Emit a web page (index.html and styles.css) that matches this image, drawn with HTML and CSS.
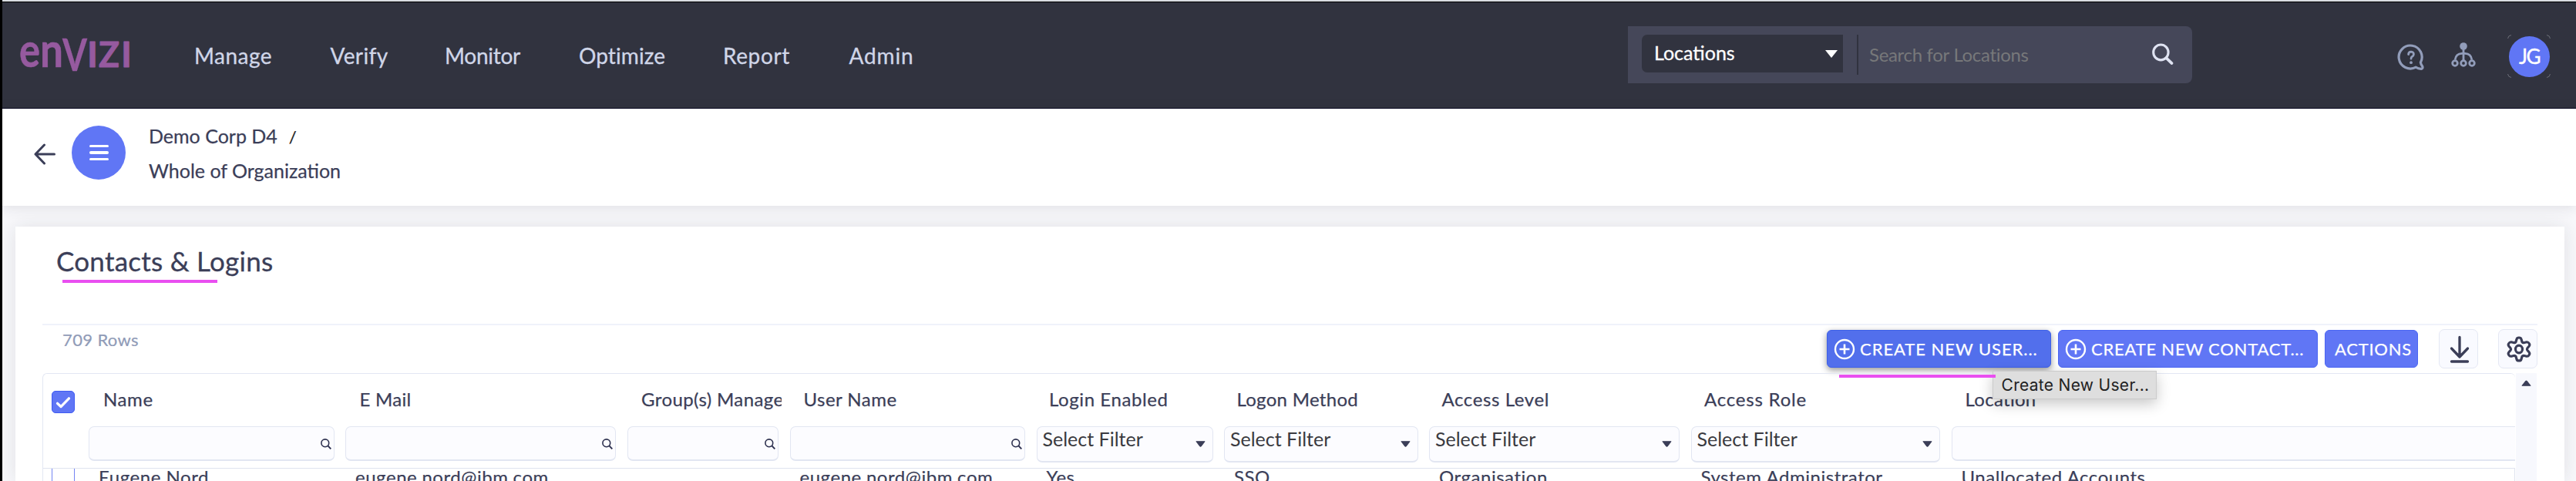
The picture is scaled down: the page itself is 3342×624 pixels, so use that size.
FILE: index.html
```html
<!DOCTYPE html>
<html lang="en">
<head>
<meta charset="utf-8">
<title>Contacts &amp; Logins</title>
<link rel="stylesheet" href="styles.css">
</head>
<body>
<svg class="defs" width="0" height="0">
  <symbol id="mag" viewBox="0 0 14 14"><circle cx="5.8" cy="5.8" r="4.9" fill="none" stroke="currentColor" stroke-width="1.6"/><path d="M9.4 9.4L13.3 13.4" stroke="currentColor" stroke-width="1.9"/></symbol>
  <symbol id="caret" viewBox="0 0 12 7"><path d="M1 .5H11L6.6 6.2Q6 6.8 5.4 6.2Z" fill="currentColor" stroke="currentColor" stroke-width="1" stroke-linejoin="round"/></symbol>
  <symbol id="plus" viewBox="0 0 28 28"><circle cx="14" cy="14" r="12" fill="none" stroke="currentColor" stroke-width="2.4"/><path d="M14 7.5V20.5M7.5 14H20.5" stroke="currentColor" stroke-width="2.6"/></symbol>
</svg>

<header class="topbar">
  <svg class="logo" viewBox="0 0 144 46" role="img" aria-label="envizi">
    <text class="lg-low" x="-1" y="38.500" textLength="27" lengthAdjust="spacingAndGlyphs">e</text>
    <text class="lg-low" x="26" y="38.500" textLength="30" lengthAdjust="spacingAndGlyphs">n</text>
    <text class="lg-v" x="55" y="44" textLength="32" lengthAdjust="spacingAndGlyphs">V</text>
    <text class="lg-cap" x="87" y="38.500" textLength="14" lengthAdjust="spacingAndGlyphs">I</text>
    <text class="lg-cap" x="102" y="38.500" textLength="27" lengthAdjust="spacingAndGlyphs">Z</text>
    <text class="lg-cap" x="131" y="38.500" textLength="14" lengthAdjust="spacingAndGlyphs">I</text>
  </svg>
  <nav class="nav">
    <a class="sp5">Manage</a><a class="sp4">Verify</a><a class="spn2">Monitor</a><a class="sp1">Optimize</a><a class="sp6">Report</a><a class="sp8">Admin</a>
  </nav>
  <div class="search">
    <div class="scope"><span>Locations</span><svg class="scope-caret" viewBox="0 0 16 10"><path d="M0 0H16L8 10Z" fill="#fff"/></svg></div>
    <div class="divider"></div>
    <span class="placeholder">Search for Locations</span>
    <svg class="search-icon" viewBox="0 0 30 30" fill="none" stroke="#dfe3f2" stroke-linecap="round"><ellipse cx="12.3" cy="12.3" rx="10" ry="10.3" stroke-width="3.2"/><path d="M19.5 19.8L27 27" stroke-width="3.8"/></svg>
  </div>
  <div class="tools">
    <svg class="help" viewBox="0 0 36 36" fill="none" stroke="#929dba" stroke-width="3.2" stroke-linecap="round" stroke-linejoin="round">
      <path d="M30.4 25A15 15 0 1 0 24.3 31.2Q27.5 33.4 31.3 33.3Q33.6 32.9 32.8 30.2Q30.6 27.2 30.4 25Z"/>
      <path d="M14.6 14.6Q14.7 11.2 18.1 11.2Q21.7 11.4 21.4 14.6Q21.2 16.6 19.4 17.4Q18 18.2 18 20.2" stroke-width="2.8"/><circle cx="18" cy="25.2" r="1.9" fill="#929dba" stroke="none"/>
    </svg>
    <svg class="org" viewBox="0 0 32 32" fill="none" stroke="#929dba" stroke-width="2.8">
      <circle cx="16" cy="5" r="4.8" fill="#929dba" stroke="none"/><path d="M16 8V23M5.2 22.5Q6.2 14.6 14 14.4H18Q25.8 14.6 26.8 22.5"/>
      <circle cx="5" cy="27" r="3.3"/><circle cx="16" cy="27" r="3.3"/><circle cx="27" cy="27" r="3.3"/>
    </svg>
    <div class="avatar">
      <svg class="avatar-corners" viewBox="0 0 56 56" fill="none" stroke="#6c6e78" stroke-width="1"><path d="M.5 5Q1 1 5 .5M51 .5Q55 1 55.5 5M.5 51Q1 55 5 55.5M51 55.5Q55 55 55.5 51"/></svg>
      <span>JG</span>
    </div>
  </div>
</header>

<section class="context">
  <svg class="back" viewBox="0 0 28 28" fill="none" stroke="#3b3e58" stroke-width="3" stroke-linecap="round" stroke-linejoin="round"><path d="M26.5 14H2M13.5 2L2 14L13.5 26"/></svg>
  <div class="menu"><i></i><i></i><i></i></div>
  <div class="crumbs">
    <div><span>Demo Corp D4</span><span class="slash">/</span></div>
    <div>Whole of Organization</div>
  </div>
</section>

<main class="card">
  <h1 class="title">Contacts &amp; Logins</h1>
  <div class="mark mark-title"></div>

  <div class="toolbar">
    <span class="rows">709 Rows</span>
    <div class="btn btn-user"><svg><use href="#plus"/></svg><span>CREATE NEW USER...</span></div>
    <div class="btn btn-contact"><svg><use href="#plus"/></svg><span>CREATE NEW CONTACT...</span></div>
    <div class="btn btn-actions"><span>ACTIONS</span></div>
    <div class="sq sq-down"><svg viewBox="0 0 26 36" fill="none" stroke="#3b3e58" stroke-width="3.3" stroke-linecap="round" stroke-linejoin="round"><path d="M13 2.5V27M2.5 17L13 28L23.5 17M2.5 34H23.5"/><path d="M9.5 24.5L13 29L16.5 24.5Z" fill="#3b3e58" stroke-width="1"/></svg></div>
    <div class="sq sq-gear"><svg viewBox="0 0 32 34" fill="none" stroke="#3b3e58" stroke-width="3.2" stroke-linejoin="round"><path d="M13 4Q13.5 2 16 2Q18.500 2 19 4L20 7.500Q21 9 23 8.500L26 7.800Q28 7.500 29.200 9.500Q30.500 11.500 29 13.200L27 15.600Q26 17 27 18.400L29 20.800Q30.500 22.500 29.200 24.500Q28 26.500 26 26.200L23 25.500Q21 25 20 26.500L19 30Q18.500 32 16 32Q13.500 32 13 30L12 26.500Q11 25 9 25.500L6 26.200Q4 26.500 2.800 24.500Q1.500 22.500 3 20.800L5 18.400Q6 17 5 15.600L3 13.200Q1.500 11.500 2.800 9.500Q4 7.500 6 7.800L9 8.500Q11 9 12 7.500Z"/><ellipse cx="16" cy="17" rx="4.500" ry="4.900"/></svg></div>
  </div>

  <div class="gridwrap">
    <div class="grid">
      <div class="cols heads">
        <div class="check on"><svg viewBox="0 0 30 29" fill="none" stroke="#fff" stroke-width="3.6" stroke-linecap="round" stroke-linejoin="round"><path d="M7 16.500L11.800 21L23 9.500"/></svg></div>
        <span class="h-name">Name</span><span class="h-mail">E Mail</span><span class="h-group">Group(s) Managed</span><span class="sp5">User Name</span><span class="sp6">Login Enabled</span><span class="sp3">Logon Method</span><span class="sp6">Access Level</span><span class="h-role">Access Role</span><span class="h-loc">Location</span>
      </div>
      <div class="cols filters">
        <div></div>
        <div class="f"><svg class="mg"><use href="#mag"/></svg></div>
        <div class="f"><svg class="mg"><use href="#mag"/></svg></div>
        <div class="f"><svg class="mg"><use href="#mag"/></svg></div>
        <div class="f"><svg class="mg"><use href="#mag"/></svg></div>
        <div class="f sel"><span>Select Filter</span><svg class="ct"><use href="#caret"/></svg></div>
        <div class="f sel"><span>Select Filter</span><svg class="ct"><use href="#caret"/></svg></div>
        <div class="f sel"><span>Select Filter</span><svg class="ct"><use href="#caret"/></svg></div>
        <div class="f sel"><span>Select Filter</span><svg class="ct"><use href="#caret"/></svg></div>
        <div class="f open"></div>
      </div>
      <div class="cols data">
        <div class="check off"></div>
        <span>Eugene Nord</span><span>eugene.nord@ibm.com</span><span></span><span>eugene.nord@ibm.com</span><span>Yes</span><span>SSO</span><span>Organisation</span><span>System Administrator</span><span>Unallocated Accounts</span>
      </div>
    </div>
    <div class="scroll"><svg viewBox="0 0 12 7"><path d="M1 6.500L5.400 1Q6 .4 6.600 1L11 6.500Z" fill="#3b3e58" stroke="#3b3e58" stroke-linejoin="round"/></svg></div>
  </div>
  <div class="tooltip">Create New User...</div>
  <div class="mark mark-btn"></div>
</main>
</body>
</html>
```
FILE: styles.css
```css
* { box-sizing: border-box; }
html { overflow: hidden; }
body {
  margin: 0;
  height: 624px;
  overflow: hidden;
  border-left: 3px solid #000;
  background: #f8f8fb;
  color: #3b3e58;
  font-family: Lato, "Open Sans", sans-serif;
  white-space: nowrap;
}
svg { display: block; flex: none; }
.defs { position: absolute; }

.sp1 { letter-spacing: .1px; }
.sp3 { letter-spacing: .3px; }
.sp4 { letter-spacing: .36px; }
.sp5 { letter-spacing: .47px; }
.sp6 { letter-spacing: .6px; }
.sp8 { letter-spacing: .86px; }
.spn2 { letter-spacing: -.26px; }

/* top bar */
.topbar {
  display: flex;
  align-items: center;
  height: 141px;
  border-top: 2px solid #d9dde1;
  border-bottom: 1px solid #05051e;
  box-shadow: inset 0 1px 0 #000;
  background: #31333f;
}
.logo { width: 144px; height: 46px; margin-left: 23px; overflow: visible; fill: #965a9f; stroke: #965a9f; stroke-linejoin: round; }
.lg-low { font: 700 62px Lato, sans-serif; stroke-width: .6; }
.lg-v { font: 700 58px Lato, sans-serif; stroke-width: .3; }
.lg-cap { font: 700 45px Lato, sans-serif; stroke-width: .9; }
.nav {
  display: grid;
  grid-template-columns: 176.500px 148.500px 174px 187px 163.500px 90px;
  margin: 2px 0 0 82px;
  font-size: 28px;
  color: #d0d6e8;
  -webkit-text-stroke: .3px;
}
.search {
  display: flex;
  align-items: flex-start;
  width: 732px;
  height: 74px;
  margin: 0 0 0 920.500px;
  padding: 11px 0 0 18px;
  border-radius: 0 8px 8px 0;
  background: #454759;
}
.scope {
  display: flex;
  align-items: center;
  justify-content: space-between;
  width: 261px;
  height: 49px;
  padding: 0 7px 3px 16px;
  border-radius: 7px 0 0 7px;
  background: #31333f;
  color: #fff;
  font-size: 25px;
  -webkit-text-stroke: .3px;
}
.scope-caret { width: 16px; height: 10px; margin-top: 4px; }
.divider { width: 2px; height: 52px; margin-left: 18px; background: #31333f; }
.placeholder {
  margin-left: 14px;
  font-size: 24px;
  line-height: 51px;
  letter-spacing: -.31px;
  color: #77787a;
}
.search-icon { width: 30px; height: 29px; margin: 11px 0 0 159px; }
.tools { display: flex; align-items: center; margin-left: 266px; }
.help { width: 36px; height: 36px; margin-top: 5px; }
.org { width: 32px; height: 32px; margin: 0 0 1px 34px; }
.avatar {
  position: relative;
  display: flex;
  align-items: center;
  justify-content: center;
  width: 53px;
  height: 53px;
  margin: 4px 0 0 43px;
  border-radius: 50%;
  background: #6076f5;
  color: #fff;
  font-size: 26px;
  letter-spacing: -1.4px;
  -webkit-text-stroke: .4px;
}
.avatar-corners { position: absolute; inset: -2px; width: 56px; height: 56px; }

/* breadcrumb strip */
.context {
  display: flex;
  align-items: flex-start;
  height: 126px;
  background: #fff;
  box-shadow: 0 2px 16px rgba(30, 32, 50, .12);
}
.back { width: 28px; height: 28px; margin: 45px 0 0 41px; }
.menu {
  display: flex;
  flex-direction: column;
  align-items: center;
  justify-content: center;
  gap: 5px;
  width: 70px;
  height: 70px;
  margin: 22px 0 0 21px;
  border-radius: 50%;
  background: #6076f5;
}
.menu i { width: 25px; height: 3.6px; border-radius: 2px; background: #fff; }
.crumbs { margin: 13px 0 0 30px; font-size: 25px; line-height: 44.500px; -webkit-text-stroke: .25px; }
.slash { margin-left: 15px; color: #222; font-size: 22px; line-height: 20px; }

/* card */
.card {
  position: relative;
  height: 330px;
  overflow: hidden;
  margin: 27px 15px 0 17px;
  padding: 21px 35px 0;
  background: #fff;
  box-shadow: 0 0 24px rgba(30, 32, 50, .11);
}
.title {
  margin: 0 0 60px 18px;
  font-size: 35px;
  font-weight: 400;
  line-height: 46px;
  height: 45px;
  letter-spacing: .25px;
  -webkit-text-stroke: .3px;
}
.mark { position: absolute; background: #e94ff0; }
.mark-title { left: 61px; top: 69px; width: 201px; height: 4px; }
.mark-btn { left: 2366px; top: 192px; width: 203px; height: 4px; }

.toolbar {
  display: flex;
  align-items: center;
  height: 64px;
  padding-bottom: 1px;
  border-top: 2px solid #eff2fa;
}
.rows { margin: -24px auto 0 26px; font-size: 22px; letter-spacing: .37px; color: #909bb7; -webkit-text-stroke: .2px; }
.btn {
  display: flex;
  align-items: center;
  height: 49px;
  border: 1px solid #4b66f2;
  border-radius: 6px;
  background: #6076f5;
  color: #fff;
  font-size: 22px;
  -webkit-text-stroke: .25px;
}
.btn svg { width: 28px; height: 28px; margin: 0 6px 0 8px; }
.btn-user { width: 291px; letter-spacing: .95px; background: #526fec; border-color: #3d60e8; box-shadow: 0 3px 9px rgba(0, 0, 0, .42); }
.btn-contact { width: 337px; margin-left: 9px; letter-spacing: .78px; }
.btn-actions { width: 121px; margin-left: 9px; padding-left: 12px; letter-spacing: .76px; }
.sq {
  display: flex;
  align-items: center;
  justify-content: center;
  width: 51px;
  height: 51px;
  border: 1px solid #e4e8f4;
  border-radius: 7px;
  background: #f9faff;
}
.sq-down { margin-left: 27px; }
.sq-down svg { width: 26px; height: 36px; margin-left: 2px; }
.sq-gear { margin-left: 26px; }
.sq-gear svg { width: 32px; height: 34px; margin-left: 2px; }

/* data grid */
.gridwrap { display: flex; }
.grid {
  width: 3208px;
  height: 140px;
  overflow: hidden;
  border: solid #e3e7f3;
  border-width: 1px 0 0 1px;
  border-radius: 6px 6px 0 0;
}
.cols {
  display: grid;
  grid-template-columns: 59px 333px 365.500px 211px 320px 243.500px 266px 339.500px 338px 732px;
}
.heads { height: 68px; font-size: 24px; line-height: 66px; }
.heads > span { padding-left: 16.500px; overflow: hidden; -webkit-text-stroke: .25px; }
.heads .h-name { padding-left: 19px; letter-spacing: .6px; }
.heads .h-mail { padding-left: 18.500px; letter-spacing: .3px; }
.heads .h-group { margin-right: 11px; padding-left: 18.500px; letter-spacing: .4px; }
.heads .sp5 { padding-left: 18px; }
.heads .h-role { padding-left: 17.500px; letter-spacing: .8px; }
.heads .h-loc { padding-left: 18px; letter-spacing: .3px; }
.check { width: 30px; margin-left: 11px; }
.check.on { height: 29px; margin-top: 22px; border: 1px solid #3f5bf3; border-radius: 5px; background: #6076f5; }
.check.on svg { width: 28px; height: 27px; }
.check.off { height: 16px; border: solid #7485f3; border-width: 0 1.500px; }
.filters { height: 55px; border-bottom: 1px solid #dfe3ef; }
.f {
  display: flex;
  align-items: center;
  justify-content: flex-end;
  height: 45px;
  margin-right: 14.500px;
  border: 1px solid #e2e6f2;
  border-bottom-width: 2px;
  border-radius: 7px;
  background: #fcfcff;
  color: #2c2f4e;
}
.f.sel { height: 47px; justify-content: space-between; }
.f.sel span { padding: 0 0 15px 7px; color: #3a3a40; font-size: 25px; line-height: 30px; }
.f.open { margin-right: -12px; }
.mg { width: 14px; height: 14px; margin: 2px 3px 0 0; }
.ct { width: 13px; height: 8px; margin-right: 9px; color: #3b3e58; }
.data { height: 16px; border-right: 1px solid #dfe3ef; font-size: 24px; line-height: 22px; letter-spacing: .53px; -webkit-text-stroke: .2px; }
.data span { padding-left: 13px; }
.scroll { width: 27px; margin-left: 1px; padding: 9px 0 0 7px; background: #f7f8fd; }
.scroll svg { width: 13px; height: 8px; }

.tooltip {
  position: absolute;
  left: 2564.500px;
  top: 187px;
  width: 213px;
  height: 37px;
  padding-left: 11px;
  border: 1px solid #cbcbcb;
  background: #dedede;
  box-shadow: 0 6px 18px rgba(0, 0, 0, .22);
  color: #222;
  font: 21px Inter, sans-serif;
  line-height: 36px;
  letter-spacing: .3px;
}
```
